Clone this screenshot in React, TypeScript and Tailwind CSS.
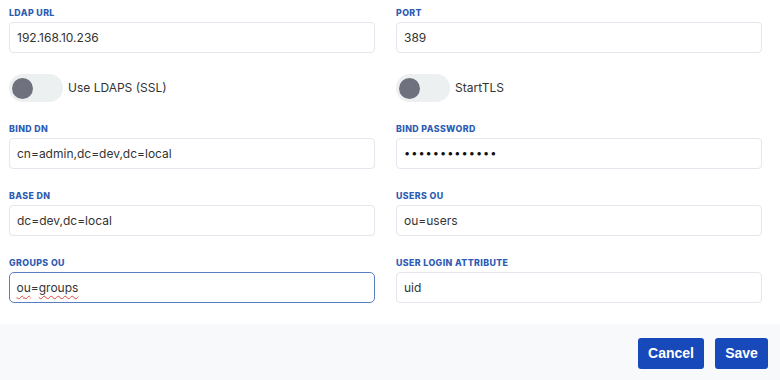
import React from "react";

function Label({ children }: { children: React.ReactNode }) {
  return (
    <div className="h-[12px] text-[8.8px] leading-[12px] font-extrabold tracking-[0.045em] text-[#2d5cb4] font-['Inter','Noto_Sans',sans-serif]">
      {children}
    </div>
  );
}

function Field({
  label,
  value,
  focused,
}: {
  label: string;
  value: React.ReactNode;
  focused?: boolean;
}) {
  return (
    <div>
      <Label>{label}</Label>
      <div
        className={
          focused
            ? "mt-[3px] h-[31px] flex items-center px-[6.5px] rounded-[5px] border-[1.5px] border-[#5a7fc0] bg-white text-[12px] text-[#333]"
            : "mt-[3px] h-[31px] flex items-center px-[7px] rounded-[4px] border border-[#e3e6ec] bg-white text-[12px] text-[#333]"
        }
      >
        {value}
      </div>
    </div>
  );
}

function Toggle({ label }: { label: string }) {
  return (
    <div className="flex items-center h-[28px]">
      <div className="w-[54px] h-[28px] rounded-full bg-[#edf0f1] flex items-center pl-[3px]">
        <div className="w-[21px] h-[21px] rounded-full bg-[#6f727e]" />
      </div>
      <span className="ml-[5px] text-[12px] text-[#333]">{label}</span>
    </div>
  );
}

export default function App() {
  const squiggle =
    "underline decoration-wavy decoration-[#e0453a] decoration-[1px] underline-offset-[3px]";
  return (
    <div className="w-[780px] h-[380px] bg-white font-['Inter','Noto_Sans',sans-serif] flex flex-col">
      <div className="grid grid-cols-2 gap-x-[21px] gap-y-[21px] pl-[9px] pr-[18px] pt-[7px] pb-[21px]">
        <Field label="LDAP URL" value="192.168.10.236" />
        <Field label="PORT" value="389" />
        <Toggle label="Use LDAPS (SSL)" />
        <Toggle label="StartTLS" />
        <Field label="BIND DN" value="cn=admin,dc=dev,dc=local" />
        <Field
          label="BIND PASSWORD"
          value={
            <span className="text-[11px] tracking-[1px] text-[#111]">
              •••••••••••••
            </span>
          }
        />
        <Field label="BASE DN" value="dc=dev,dc=local" />
        <Field label="USERS OU" value="ou=users" />
        <Field
          label="GROUPS OU"
          focused
          value={
            <span>
              <span className={squiggle}>ou</span>=
              <span className={squiggle}>groups</span>
            </span>
          }
        />
        <Field label="USER LOGIN ATTRIBUTE" value="uid" />
      </div>
      <div className="flex-1 bg-[#f8f9fb] flex justify-end items-start pt-[14px] pr-[12px] gap-[11px]">
        <button className="h-[31px] w-[66px] rounded-[3px] bg-[#1749bb] text-white text-[14px] font-bold font-['Liberation_Sans',Arial,sans-serif]">
          Cancel
        </button>
        <button className="h-[31px] w-[53px] rounded-[3px] bg-[#1749bb] text-white text-[14px] font-bold font-['Liberation_Sans',Arial,sans-serif]">
          Save
        </button>
      </div>
    </div>
  );
}
